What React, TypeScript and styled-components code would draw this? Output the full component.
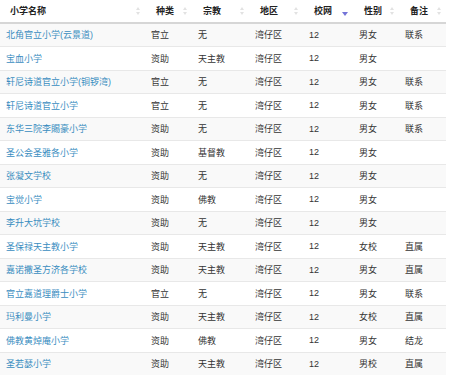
import React from "react";
import styled, { createGlobalStyle } from "styled-components";

const Global = createGlobalStyle`
  html, body { margin: 0; padding: 0; background: #fff; }
  body { font-family: "Liberation Sans", "Noto Sans CJK SC", sans-serif; color: #333; }
`;

const Table = styled.table`
  width: 446px;
  border-collapse: collapse;
  table-layout: fixed;
  font-size: 9px;
`;

const Th = styled.th<{ $pl: number }>`
  position: relative;
  height: 21.5px;
  padding: 0 0 0 ${(p) => p.$pl}px;
  text-align: left;
  font-weight: bold;
  color: #222;
  border-bottom: 2px solid #d6d6d6;
  white-space: nowrap;
`;

const SortBoth = styled.span`
  position: absolute;
  right: 5px;
  top: 7px;
  width: 4px;
  height: 9px;
  &::before, &::after {
    content: "";
    position: absolute;
    left: 0;
    border-left: 2px solid transparent;
    border-right: 2px solid transparent;
  }
  &::before { top: 0; border-bottom: 3px solid #e2e2e2; }
  &::after { top: 5px; border-top: 3px solid #e2e2e2; }
`;

const SortDesc = styled.span`
  position: absolute;
  right: 5px;
  top: 12px;
  width: 0;
  height: 0;
  border-left: 3px solid transparent;
  border-right: 3px solid transparent;
  border-top: 4px solid #7474d8;
`;

const Row = styled.tr<{ $odd: boolean }>`
  background: ${(p) => (p.$odd ? "#f9f9f9" : "#fff")};
  & > td { border-top: 1px solid #e8e8e8; }
`;

const Td = styled.td`
  height: 22.5px;
  padding: 0 0 0 6px;
  white-space: nowrap;
  overflow: hidden;
  color: #333;
`;

const Link = styled.a`
  color: #3a8dbf;
  text-decoration: none;
`;

const cols = [145, 47, 57, 54, 50, 46, 47];
const headers = ["小学名称", "种类", "宗教", "地区", "校网", "性别", "备注"];

const rows: string[][] = [
  ["北角官立小学(云景道)", "官立", "无", "湾仔区", "12", "男女", "联系"],
  ["宝血小学", "资助", "天主教", "湾仔区", "12", "男女", ""],
  ["轩尼诗道官立小学(铜锣湾)", "官立", "无", "湾仔区", "12", "男女", "联系"],
  ["轩尼诗道官立小学", "官立", "无", "湾仔区", "12", "男女", "联系"],
  ["东华三院李賜豪小学", "资助", "无", "湾仔区", "12", "男女", "联系"],
  ["圣公会圣雅各小学", "资助", "基督教", "湾仔区", "12", "男女", ""],
  ["张凝文学校", "资助", "无", "湾仔区", "12", "男女", ""],
  ["宝觉小学", "资助", "佛教", "湾仔区", "12", "男女", ""],
  ["李升大坑学校", "资助", "无", "湾仔区", "12", "男女", ""],
  ["圣保禄天主教小学", "资助", "天主教", "湾仔区", "12", "女校", "直属"],
  ["嘉诺撒圣方济各学校", "资助", "天主教", "湾仔区", "12", "男女", "直属"],
  ["官立嘉道理爵士小学", "官立", "无", "湾仔区", "12", "男女", "联系"],
  ["玛利曼小学", "资助", "天主教", "湾仔区", "12", "女校", "直属"],
  ["佛教黄焯庵小学", "资助", "佛教", "湾仔区", "12", "男女", "结龙"],
  ["圣若瑟小学", "资助", "天主教", "湾仔区", "12", "男校", "直属"],
];

export default function App() {
  return (
    <>
      <Global />
      <Table>
        <colgroup>
          {cols.map((w, i) => (
            <col key={i} style={{ width: w }} />
          ))}
        </colgroup>
        <thead>
          <tr>
            {headers.map((h, i) => (
              <Th key={h} $pl={i === 0 ? 10 : 11}>
                {h}
                {i === 4 ? <SortDesc /> : <SortBoth />}
              </Th>
            ))}
          </tr>
        </thead>
        <tbody>
          {rows.map((r, i) => (
            <Row key={i} $odd={i % 2 === 0}>
              <Td>
                <Link href="#">{r[0]}</Link>
              </Td>
              {r.slice(1).map((c, j) => (
                <Td key={j}>{c}</Td>
              ))}
            </Row>
          ))}
        </tbody>
      </Table>
    </>
  );
}
